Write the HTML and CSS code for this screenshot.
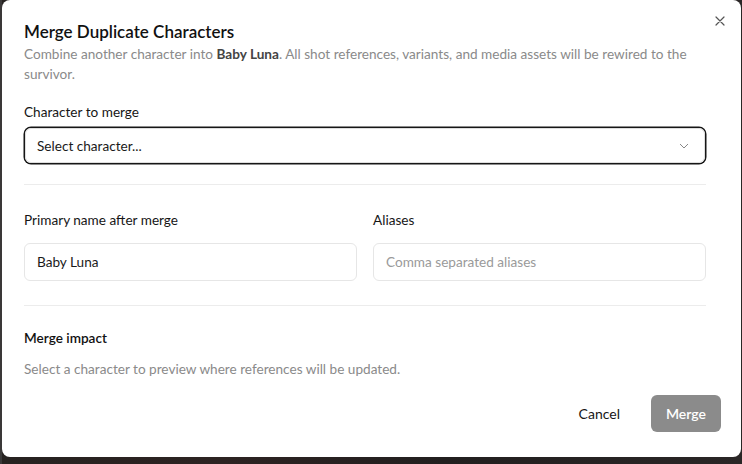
FILE: index.html
```html
<!DOCTYPE html>
<html>
<head>
<meta charset="utf-8">
<link rel="stylesheet" href="styles.css">
</head>
<body>
<div class="backdrop">
  <div class="dialog">
    <button class="close" aria-label="Close">
      <svg width="10" height="10" viewBox="0 0 10 10"><path d="M1 1L9 9M9 1L1 9" stroke="#555" stroke-width="1.2" stroke-linecap="round"/></svg>
    </button>
    <h1 class="title">Merge Duplicate Characters</h1>
    <p class="subtitle">Combine another character into <b>Baby Luna</b>. All shot references, variants, and media assets will be rewired to the survivor.</p>

    <div class="field field-main">
      <div class="label">Character to merge</div>
      <div class="select">
        <span>Select character...</span>
        <svg class="chev" width="10" height="6" viewBox="0 0 10 6"><path d="M1 1L5 5L9 1" fill="none" stroke="#888" stroke-width="1"/></svg>
      </div>
    </div>

    <div class="sep sep1"></div>

    <div class="cols">
      <div class="field">
        <div class="label">Primary name after merge</div>
        <div class="input">Baby Luna</div>
      </div>
      <div class="field">
        <div class="label">Aliases</div>
        <div class="input placeholder">Comma separated aliases</div>
      </div>
    </div>

    <div class="sep sep2"></div>

    <div class="impact">
      <div class="impact-title">Merge impact</div>
      <p class="impact-text">Select a character to preview where references will be updated.</p>
    </div>

    <div class="actions">
      <button class="btn cancel">Cancel</button>
      <button class="btn merge">Merge</button>
    </div>
  </div>
</div>
</body>
</html>
```

FILE: styles.css
```css
html, body {
  margin: 0;
  padding: 0;
}
body {
  width: 742px;
  height: 464px;
  overflow: hidden;
  background: #2b2827;
  font-family: "Lato", "Liberation Sans", sans-serif;
  color: #161616;
}
.backdrop {
  height: 464px;
  background: linear-gradient(90deg, #3a3838 0, #3a3838 2px, #262220 2px, #2d2322 30%, #221f1f 60%, #2a2626 100%);
  padding-left: 2px;
  box-sizing: border-box;
}
.dialog {
  position: relative;
  width: 739px;
  height: 457px;
  background: #fff;
  border-radius: 8px;
  box-sizing: border-box;
  padding: 20px 35px 0 22px;
}
.close {
  position: absolute;
  top: 16px;
  right: 16px;
  width: 10px;
  height: 10px;
  padding: 0;
  border: 0;
  background: none;
  display: flex;
}
.title {
  margin: 0;
  font-size: 17px;
  line-height: 24px;
  font-weight: 600;
  color: #111;
}
.subtitle {
  margin: 0;
  font-size: 13.6px;
  line-height: 20px;
  color: #8a8a8a;
}
.subtitle b {
  color: #444;
  font-weight: 700;
}
.field {
  display: flex;
  flex-direction: column;
}
.field .label {
  font-size: 13.6px;
  line-height: 20px;
  color: #161616;
}
.field-main {
  margin-top: 18px;
}
.select {
  margin-top: 6px;
  height: 35px;
  box-sizing: border-box;
  border: 1px solid #dedede;
  border-radius: 6px;
  box-shadow: 0 0 0 1.5px #161616;
  margin-left: 1px;
  margin-right: 1px;
  display: flex;
  align-items: center;
  justify-content: space-between;
  padding: 0 15px 0 11px;
  font-size: 13.6px;
  color: #1a1a1a;
}
.sep {
  height: 1px;
  background: #ececec;
}
.sep1 {
  margin-top: 21px;
}
.cols {
  display: grid;
  grid-template-columns: 1fr 1fr;
  gap: 16px;
  margin-top: 25px;
}
.input {
  margin-top: 13px;
  height: 38px;
  box-sizing: border-box;
  border: 1px solid #e6e6e6;
  border-radius: 6px;
  display: flex;
  align-items: center;
  padding: 0 12px;
  font-size: 13.6px;
  color: #1a1a1a;
}
.input.placeholder {
  color: #9a9a9a;
}
.sep2 {
  margin-top: 24px;
}
.impact {
  margin-top: 22px;
}
.impact-title {
  font-size: 13.6px;
  line-height: 20px;
  font-weight: 600;
  color: #111;
}
.impact-text {
  margin: 11px 0 0;
  font-size: 13.6px;
  line-height: 20px;
  color: #8a8a8a;
}
.actions {
  display: flex;
  justify-content: flex-end;
  gap: 15px;
  margin-top: 16px;
  margin-right: -15px;
}
.btn {
  font-family: inherit;
  font-size: 14px;
  height: 37px;
  border: 0;
  border-radius: 6px;
  padding: 0 16px;
  background: none;
  color: #161616;
}
.btn.merge {
  background: #8b8b8b;
  color: #fff;
  font-weight: 600;
  width: 70px;
  padding: 0;
}
```
